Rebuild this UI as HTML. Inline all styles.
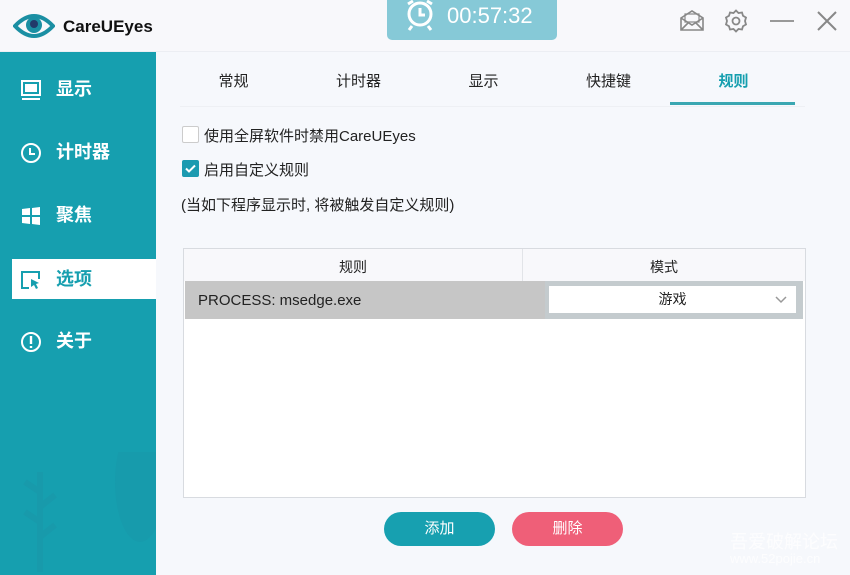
<!DOCTYPE html>
<html><head><meta charset="utf-8"><style>
*{margin:0;padding:0;box-sizing:border-box}
body{width:850px;height:575px;overflow:hidden;background:#f6f8fc;font-family:"Liberation Sans","Noto Sans CJK SC",sans-serif;position:relative;color:#222}
.abs{position:absolute}
#hdr{left:0;top:0;width:850px;height:52px;background:#f8f8fb;border-bottom:1px solid #eceef3}
#side{left:0;top:52px;width:156px;height:523px;background:#169faf}
.nav{position:absolute;left:0;width:156px;height:40px;color:#fff;font-size:18px;font-weight:bold;line-height:40px;padding-left:56px}
.nav svg{position:absolute;left:20px;top:10px}
.nav.sel{left:12px;width:144px;background:#fff;color:#169faf;padding-left:44px}
.nav.sel svg{left:8px}
.tab{position:absolute;top:70px;width:125px;text-align:center;font-size:15px;color:#222}
.cb{position:absolute;left:182px;width:17px;height:17px;border:1px solid #ccc;border-radius:2px;background:#fff}
.lbl{position:absolute;left:204px;font-size:15px;color:#222}
.btn{position:absolute;top:512px;width:111px;height:34px;border-radius:17px;color:#fff;font-size:15px;text-align:center;line-height:34px}
</style></head><body>
<div id="hdr" class="abs"></div>
<svg class="abs" style="left:13px;top:10px" width="42" height="32" viewBox="0 0 42 32"><path d="M2 16 Q21 -4 40 16 Q21 36 2 16Z" fill="none" stroke="#1b8fa3" stroke-width="4"/><circle cx="21" cy="15" r="8" fill="#1b8fa3"/><circle cx="21" cy="14" r="4" fill="#223a6a"/></svg>
<div class="abs" style="left:63px;top:17px;font-size:17px;font-weight:bold;color:#111">CareUEyes</div>
<div class="abs" style="left:387px;top:0;width:170px;height:40px;background:#86c9d7;border-radius:0 0 5px 5px"></div>
<svg class="abs" style="left:403px;top:0" width="34" height="32" viewBox="0 0 34 32"><circle cx="17" cy="14" r="11" fill="none" stroke="#fff" stroke-width="3"/><path d="M17 8v7h5M5 4l5-3M29 4l-5-3M9 26l-3 4M25 26l3 4" stroke="#fff" stroke-width="3" fill="none"/></svg>
<div class="abs" style="left:447px;top:3px;font-size:22px;color:#fff">00:57:32</div>
<svg class="abs" style="left:679px;top:10px" width="26" height="22" viewBox="0 0 26 22"><path d="M2 8 L13 1 L24 8 V20 H2Z M2 8 L13 15 L24 8 M2 20 L10 12 M24 20 L16 12" fill="none" stroke="#888" stroke-width="1.6"/><rect x="6" y="4" width="14" height="8" fill="none" stroke="#888" stroke-width="1.2"/></svg>
<svg class="abs" style="left:724px;top:9px" width="24" height="24" viewBox="0 0 24 24"><path d="M12 1.5l2.5 2.5 3.5-.5 1 3.3 3 1.7-1 3.5 1 3.5-3 1.7-1 3.300-3.5-.5L12 22.5l-2.5-2.5-3.5.5-1-3.3-3-1.7 1-3.5-1-3.5 3-1.7 1-3.3 3.5.5Z" fill="none" stroke="#888" stroke-width="1.8"/><circle cx="12" cy="12" r="3.5" fill="none" stroke="#888" stroke-width="1.8"/></svg>
<div class="abs" style="left:770px;top:20px;width:24px;height:2px;background:#999"></div>
<svg class="abs" style="left:817px;top:11px" width="20" height="20"><path d="M1 1L19 19M19 1L1 19" stroke="#888" stroke-width="2"/></svg>

<div id="side" class="abs">
<svg class="abs" style="left:0;top:400px" width="156" height="123" viewBox="0 0 156 123"><path d="M40 120 L40 20 M40 40 l-15 -10 M40 55 l15 -12 M40 70 l-15 -10 M40 85 l15 -12" stroke="#189aab" stroke-width="6" fill="none"/><ellipse cx="140" cy="30" rx="25" ry="60" fill="#179bac"/></svg>
</div>
<div class="nav" style="top:69px"><svg width="22" height="22" viewBox="0 0 22 22"><rect x="2" y="2" width="18" height="14" fill="none" stroke="#fff" stroke-width="2"/><rect x="5" y="5" width="12" height="8" fill="#fff"/><path d="M2 20h18" stroke="#fff" stroke-width="2"/></svg>显示</div>
<div class="nav" style="top:132px"><svg width="22" height="22" viewBox="0 0 22 22"><circle cx="11" cy="11" r="9" fill="none" stroke="#fff" stroke-width="2"/><path d="M10 6v6h5" stroke="#fff" stroke-width="2" fill="none"/></svg>计时器</div>
<div class="nav" style="top:195px"><svg width="22" height="22" viewBox="0 0 22 22"><path d="M2 4l8-1v7H2ZM12 3l8-1v8h-8ZM2 12h8v7l-8-1ZM12 12h8v8l-8-1Z" fill="#fff"/></svg>聚焦</div>
<div class="nav sel" style="top:259px"><svg width="22" height="22" viewBox="0 0 22 22"><path d="M9 19H2V3h17v7" fill="none" stroke="#169faf" stroke-width="2"/><path d="M11 10l8 4-3 1 2 4-2 1-2-4-3 2Z" fill="#169faf"/></svg>选项</div>
<div class="nav" style="top:321px"><svg width="22" height="22" viewBox="0 0 22 22"><circle cx="11" cy="11" r="9" fill="none" stroke="#fff" stroke-width="2"/><path d="M11 5v8M11 15v2" stroke="#fff" stroke-width="2.4"/></svg>关于</div>

<div class="tab" style="left:171px">常规</div>
<div class="tab" style="left:296px">计时器</div>
<div class="tab" style="left:421px">显示</div>
<div class="tab" style="left:546px">快捷键</div>
<div class="tab" style="left:671px;color:#169faf;font-weight:bold">规则</div>
<div class="abs" style="left:180px;top:106px;width:625px;height:1px;background:#eef0f4"></div>
<div class="abs" style="left:670px;top:102px;width:125px;height:3px;background:#3aa7b2"></div>

<div class="cb" style="top:126px"></div>
<div class="lbl" style="top:125px">使用全屏软件时禁用CareUEyes</div>
<div class="cb" style="top:160px;background:#1c9ab0;border-color:#1c9ab0"><svg width="15" height="15" viewBox="0 0 15 15"><path d="M3 7.5l3 3 6-6" stroke="#fff" stroke-width="2" fill="none"/></svg></div>
<div class="lbl" style="top:159px">启用自定义规则</div>
<div class="abs" style="left:181px;top:194px;font-size:15px">(当如下程序显示时, 将被触发自定义规则)</div>

<div class="abs" style="left:183px;top:248px;width:623px;height:250px;background:#fff;border:1px solid #d8dbe0"></div>
<div class="abs" style="left:184px;top:249px;width:621px;height:32px;background:#f8f8fb"></div>
<div class="abs" style="left:522px;top:249px;width:1px;height:32px;background:#e2e4e8"></div>
<div class="abs" style="left:184px;top:257px;width:338px;text-align:center;font-size:14px">规则</div>
<div class="abs" style="left:523px;top:257px;width:282px;text-align:center;font-size:14px">模式</div>
<div class="abs" style="left:185px;top:281px;width:618px;height:38px;background:#c6c6c6"></div>
<div class="abs" style="left:545px;top:281px;width:258px;height:38px;background:#c4cbce"></div>
<div class="abs" style="left:198px;top:292px;font-size:15px">PROCESS: msedge.exe</div>
<div class="abs" style="left:549px;top:286px;width:247px;height:27px;background:#fff;font-size:14px;text-align:center;line-height:27px">游戏</div>
<svg class="abs" style="left:775px;top:296px" width="12" height="8"><path d="M1 1l5 5 5-5" stroke="#999" stroke-width="1.5" fill="none"/></svg>

<div class="btn" style="left:384px;background:#17a0b0">添加</div>
<div class="btn" style="left:512px;background:#ef5f78">删除</div>
<div class="abs" style="left:730px;top:528px;font-size:18px;color:#fff;opacity:.8">吾爱破解论坛</div>
<div class="abs" style="left:730px;top:551px;font-size:13px;color:#fff;opacity:.8">www.52pojie.cn</div>
</body></html>
